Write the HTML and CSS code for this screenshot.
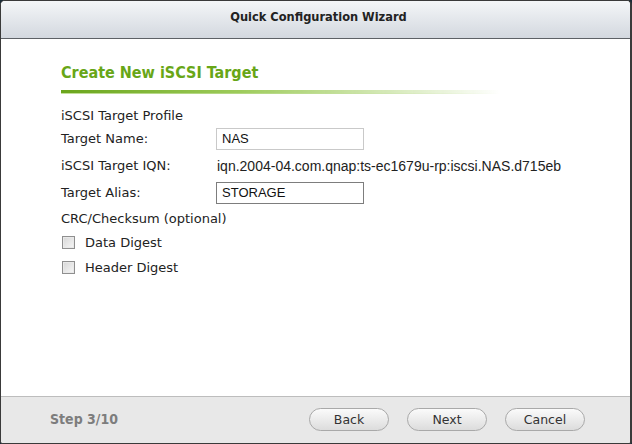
FILE: index.html
```html
<!DOCTYPE html>
<html>
<head>
<meta charset="utf-8">
<link rel="stylesheet" href="styles.css">
</head>
<body>
<div class="dialog">
  <div class="header"><span class="title">Quick Configuration Wizard</span></div>
  <div class="content">
    <h2 class="section-title">Create New iSCSI Target</h2>
    <div class="divider"></div>
    <div class="form">
      <div class="row r-profile"><span class="label">iSCSI Target Profile</span></div>
      <div class="row field"><span class="label col">Target Name:</span><input class="text-input light" type="text" value="NAS"></div>
      <div class="row field"><span class="label col">iSCSI Target IQN:</span><span class="iqn">iqn.2004-04.com.qnap:ts-ec1679u-rp:iscsi.NAS.d715eb</span></div>
      <div class="row field"><span class="label col">Target Alias:</span><input class="text-input dark" type="text" value="STORAGE"></div>
      <div class="row r-crc"><span class="label">CRC/Checksum (optional)</span></div>
      <label class="row check r-data"><span class="box"></span><span class="label">Data Digest</span></label>
      <label class="row check r-header"><span class="box"></span><span class="label">Header Digest</span></label>
    </div>
  </div>
  <div class="footer">
    <span class="step">Step 3/10</span>
    <div class="buttons">
      <button class="btn">Back</button>
      <button class="btn">Next</button>
      <button class="btn">Cancel</button>
    </div>
  </div>
</div>
</body>
</html>
```
FILE: styles.css
```css
html, body {
  margin: 0;
  padding: 0;
  width: 632px;
  height: 444px;
  background: #1b2c38;
  overflow: hidden;
}
.dialog {
  box-sizing: border-box;
  width: 632px;
  height: 444px;
  border: 1px solid #3a3a3a;
  border-right-width: 2px;
  border-radius: 5px 5px 3px 3px;
  background: #fff;
  display: flex;
  flex-direction: column;
  overflow: hidden;
  font-family: "DejaVu Sans", Verdana, sans-serif;
}
.header {
  height: 37px;
  flex: none;
  background: linear-gradient(#f4f6f8, #d3d8df);
  border-bottom: 1px solid #5d6166;
  display: flex;
  align-items: center;
  justify-content: center;
}
.title {
  font-family: "DejaVu Sans Condensed", "DejaVu Sans", sans-serif;
  font-weight: bold;
  font-size: 12.7px;
  color: #222;
  margin: -7px 0 0 6px;
}
.content {
  flex: 1;
  padding: 25px 0 0 60px;
}
.section-title {
  margin: 0;
  font-family: "DejaVu Sans Condensed", "DejaVu Sans", sans-serif;
  font-size: 16px;
  font-weight: bold;
  color: #68a617;
  line-height: 18px;
}
.divider {
  margin-top: 8px;
  width: 440px;
  height: 2px;
  background: linear-gradient(to right, #6aa51c, #9dcb5a 40%, rgba(255,255,255,0));
  border-bottom: 2px solid transparent;
  position: relative;
}
.divider::after {
  content: "";
  display: block;
  position: absolute;
  left: 0;
  top: 3px;
  width: 440px;
  height: 1px;
  background: linear-gradient(to right, #c4e09c, rgba(255,255,255,0));
}
.form {
  margin-top: 11px;
  display: flex;
  flex-direction: column;
}
.row {
  display: flex;
  align-items: center;
  height: 24px;
  font-size: 13px;
  color: #222;
}
.r-profile { height: 20px; }
.row.field { height: 27px; }
.r-crc { height: 24px; }
.r-data { height: 25px; }
.r-header { height: 24px; }
.label { white-space: nowrap; }
.col { width: 155px; flex: none; }
.text-input {
  box-sizing: border-box;
  width: 148px;
  height: 22px;
  margin: 0;
  padding: 2px 5px;
  font-family: "Liberation Sans", Arial, sans-serif;
  font-size: 13px;
  color: #111;
  background: #fff;
  outline: none;
}
.text-input.light { border: 1px solid #c9c9c9; }
.text-input.dark { border: 1px solid #7d7d7d; }
.iqn {
  font-family: "Liberation Sans", Arial, sans-serif;
  font-size: 14px;
  color: #222;
  margin-left: 1px;
}
.check { cursor: default; }
.box {
  box-sizing: border-box;
  width: 13px;
  height: 13px;
  margin: 0 10px 0 1px;
  border: 1px solid #8f8f8f;
  background: linear-gradient(135deg, #d6d6d6, #f7f7f7);
  box-shadow: inset 0 0 0 1px #e9e9e9;
}
.footer {
  height: 44px;
  flex: none;
  background: #e8e8e8;
  border-top: 1px solid #bdbdbd;
  display: flex;
  align-items: center;
  justify-content: space-between;
  padding: 0 45px 2px 49px;
}
.step {
  font-family: "DejaVu Sans Condensed", "DejaVu Sans", sans-serif;
  font-weight: bold;
  font-size: 14px;
  color: #7d7d7d;
}
.buttons {
  display: flex;
  gap: 18px;
}
.btn {
  width: 80px;
  height: 23px;
  border: 1px solid #a9a9a9;
  border-radius: 12px;
  background: linear-gradient(#fbfbfb, #dcdcdc);
  font-family: "DejaVu Sans", sans-serif;
  font-size: 12.5px;
  color: #333;
  padding: 0;
}
```
